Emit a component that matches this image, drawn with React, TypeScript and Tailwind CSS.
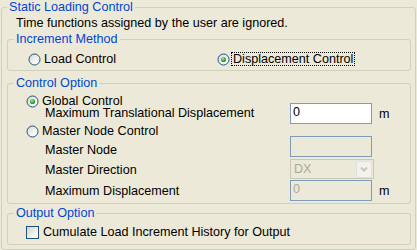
import React from "react";

function Radio({ checked }: { checked?: boolean }) {
  return (
    <svg width="13" height="13" viewBox="0 0 13 13" className="shrink-0 block">
      <defs>
        <linearGradient id="rgrad" x1="0" y1="0" x2="1" y2="1">
          <stop offset="0" stopColor="#d6d4c8" />
          <stop offset="0.6" stopColor="#f6f6f2" />
          <stop offset="1" stopColor="#ffffff" />
        </linearGradient>
        <radialGradient id="rdot" cx="0.4" cy="0.35" r="0.75">
          <stop offset="0" stopColor="#b4f0b4" />
          <stop offset="0.45" stopColor="#42b842" />
          <stop offset="1" stopColor="#1a8a1a" />
        </radialGradient>
      </defs>
      <circle cx="6.5" cy="6.5" r="5.5" fill="url(#rgrad)" stroke="#1c5180" strokeWidth="1" />
      {checked && <circle cx="6.5" cy="6.5" r="2.6" fill="url(#rdot)" />}
    </svg>
  );
}

function Checkbox() {
  return (
    <svg width="13" height="13" viewBox="0 0 13 13" className="shrink-0 block">
      <defs>
        <linearGradient id="cgrad" x1="0" y1="0" x2="1" y2="1">
          <stop offset="0" stopColor="#d2d0c4" />
          <stop offset="0.65" stopColor="#f4f4f0" />
          <stop offset="1" stopColor="#ffffff" />
        </linearGradient>
      </defs>
      <rect x="0.5" y="0.5" width="12" height="12" fill="url(#cgrad)" stroke="#1c5180" strokeWidth="1" />
    </svg>
  );
}

function Legend({ children }: { children: React.ReactNode }) {
  return <legend className="px-[2px] leading-[14px] text-[#0046d5]">{children}</legend>;
}

export default function App() {
  return (
    <div className="w-[417px] h-[250px] overflow-hidden bg-[#ece9d8] font-['Liberation_Sans',Arial,sans-serif] text-[12.6px] text-black">
      <fieldset className="ml-[1px] w-[415px] rounded-[3px] border border-[#d0d0bf] pl-[5px] pr-[4px] pt-[2px] pb-[4px]">
        <Legend>Static Loading Control</Legend>
        <div className="pl-[9px] leading-[14px]">Time functions assigned by the user are ignored.</div>

        {/* Increment Method */}
        <fieldset className="mt-[2px] rounded-[3px] border border-[#d0d0bf] pl-[6px] pt-[5px] pb-[3px]">
          <Legend>Increment Method</Legend>
          <div className="flex h-[16px] items-center pl-[14px]">
            <div className="flex w-[189px] items-center gap-[3px]">
              <Radio />
              <span className="leading-[14px]">Load Control</span>
            </div>
            <div className="flex items-center gap-[1px]">
              <Radio checked />
              <span className="border border-dotted border-black px-[1px] leading-[12px]">Displacement Control</span>
            </div>
          </div>
        </fieldset>

        {/* Control Option */}
        <fieldset className="mt-[5px] rounded-[3px] border border-[#d0d0bf] pl-[6px] pb-[2px]">
          <Legend>Control Option</Legend>
          <div className="flex pl-[12px]">
            <div className="flex w-[264px] flex-col">
              <div className="mt-[4px] flex h-[14px] items-center gap-[3px]">
                <Radio checked />
                <span className="leading-[14px]">Global Control</span>
              </div>
              <div className="mt-[-2px] pl-[19px] leading-[14px]">Maximum Translational Displacement</div>
              <div className="mt-[4px] flex h-[14px] items-center gap-[3px]">
                <Radio />
                <span className="leading-[14px]">Master Node Control</span>
              </div>
              <div className="mt-[5px] pl-[19px] leading-[14px]">Master Node</div>
              <div className="mt-[6px] pl-[19px] leading-[14px]">Master Direction</div>
              <div className="mt-[7px] pl-[19px] leading-[14px]">Maximum Displacement</div>
            </div>
            <div className="flex flex-col">
              <div className="mt-[13px] flex items-center">
                <div className="h-[21px] w-[82px] border border-[#7f9db9] bg-white pl-[2px] pt-[1px] leading-[14px]">0</div>
                <span className="ml-[7px] leading-[14px]">m</span>
              </div>
              <div className="mt-[12px] h-[21px] w-[82px] border border-[#7f9db9] bg-[#ece9d8]" />
              <div className="mt-[2px] flex h-[20px] w-[84px] items-center border border-[#c9c7ba] bg-[#ece9d8] pl-[3px] pr-[1px]">
                <span className="flex-1 leading-[14px] text-[#aca899]">DX</span>
                <div className="flex h-[17px] w-[16px] items-center justify-center rounded-[2px] border border-[#e2e1d8] bg-[#f3f2ec]">
                  <svg width="10" height="8" viewBox="0 0 10 8">
                    <path d="M2 2.5 L5 5.5 L8 2.5" fill="none" stroke="#c9c7ba" strokeWidth="2" />
                  </svg>
                </div>
              </div>
              <div className="mt-[1px] flex items-center">
                <div className="h-[21px] w-[82px] border border-[#7f9db9] bg-[#ece9d8] pl-[2px] pt-[1px] leading-[14px] text-[#aca899]">0</div>
                <span className="ml-[7px] leading-[14px]">m</span>
              </div>
            </div>
          </div>
        </fieldset>

        {/* Output Option */}
        <fieldset className="mt-[2px] rounded-[3px] border border-[#d0d0bf] pl-[6px] pt-[5px] pb-[5px]">
          <Legend>Output Option</Legend>
          <div className="flex h-[14px] items-center gap-[4px] pl-[12px]">
            <Checkbox />
            <span className="leading-[14px]">Cumulate Load Increment History for Output</span>
          </div>
        </fieldset>
      </fieldset>
    </div>
  );
}
